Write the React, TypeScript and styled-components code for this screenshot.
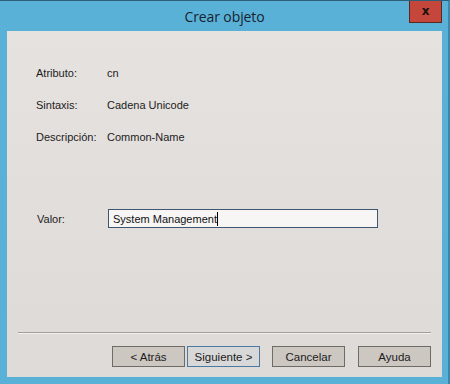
import styled, { createGlobalStyle } from "styled-components";

const GlobalStyle = createGlobalStyle`
  html, body {
    margin: 0;
    padding: 0;
    background: #5ab1d8;
  }
  * {
    box-sizing: border-box;
  }
`;

const Window = styled.div`
  width: 450px;
  height: 384px;
  display: flex;
  flex-direction: column;
  background: #5ab1d8;
  border-top: 1px solid #2f5f78;
  border-right: 2px solid #3f86a8;
  padding: 0 6px 7px 7px;
  font-family: "Liberation Sans", Arial, sans-serif;
`;

const TitleBar = styled.div`
  height: 30px;
  display: grid;
  grid-template-columns: 1fr auto 1fr;
  align-items: start;
`;

const Title = styled.div`
  grid-column: 2;
  padding-top: 6px;
  font-family: "Open Sans", "Liberation Sans", sans-serif;
  font-size: 14px;
  color: #17232e;
  letter-spacing: -0.1px;
`;

const CloseButton = styled.div`
  grid-column: 3;
  justify-self: end;
  margin-right: 0px;
  width: 33px;
  height: 22px;
  background: #c5463a;
  border: 1px solid #5a2a22;
  border-top: none;
  display: flex;
  align-items: center;
  justify-content: center;
  font-family: "DejaVu Sans", sans-serif;
  font-weight: bold;
  font-size: 12px;
  color: #1a1010;
  padding-bottom: 2px;
`;

const Content = styled.div`
  flex: 1;
  display: flex;
  flex-direction: column;
  background: linear-gradient(180deg, #e6e2df 0%, #dedad7 100%);
  padding: 35px 0 10px 0;
`;

const InfoList = styled.div`
  display: flex;
  flex-direction: column;
  gap: 18px;
  padding-left: 29px;
`;

const Row = styled.div`
  display: flex;
  align-items: center;
  font-size: 11px;
  line-height: 14px;
  color: #1c1c1c;
`;

const Label = styled.span`
  width: 71px;
`;

const ValueRow = styled(Row)`
  margin-top: 65px;
  padding-left: 30px;
`;

const Input = styled.div`
  width: 270px;
  height: 19px;
  border: 1px solid #3e5670;
  background: #f7f6f5;
  padding-left: 4px;
  display: flex;
  align-items: center;
  font-size: 11px;
  color: #101010;
`;

const Caret = styled.span`
  display: inline-block;
  width: 1px;
  height: 14px;
  background: #000;
  margin-left: 0px;
`;

const Spacer = styled.div`
  flex: 1;
`;

const Separator = styled.div`
  margin: 0 11px;
  height: 2px;
  border-top: 1px solid #a09d9a;
  border-bottom: 1px solid #f4f2f0;
`;

const ButtonRow = styled.div`
  display: flex;
  justify-content: flex-end;
  padding-right: 11px;
  margin-top: 12px;
`;

const Button = styled.div<{ $primary?: boolean; $gap?: number }>`
  width: 73px;
  height: 21px;
  margin-left: ${(p) => p.$gap ?? 0}px;
  display: flex;
  align-items: center;
  justify-content: center;
  font-size: 11.5px;
  color: #1c1c1c;
  background: ${(p) => (p.$primary ? "#d9d8d8" : "#cdc7c2")};
  border: 1px solid ${(p) => (p.$primary ? "#4a7aa2" : "#6e6a66")};
`;

export default function App() {
  return (
    <>
      <GlobalStyle />
      <Window>
        <TitleBar>
          <Title>Crear objeto</Title>
          <CloseButton>x</CloseButton>
        </TitleBar>
        <Content>
          <InfoList>
            <Row>
              <Label>Atributo:</Label>
              <span>cn</span>
            </Row>
            <Row>
              <Label>Sintaxis:</Label>
              <span>Cadena Unicode</span>
            </Row>
            <Row>
              <Label>Descripción:</Label>
              <span>Common-Name</span>
            </Row>
          </InfoList>
          <ValueRow>
            <Label>Valor:</Label>
            <Input>
              System Management
              <Caret />
            </Input>
          </ValueRow>
          <Spacer />
          <Separator />
          <ButtonRow>
            <Button>&lt; Atrás</Button>
            <Button $primary $gap={2}>
              Siguiente &gt;
            </Button>
            <Button $gap={12}>Cancelar</Button>
            <Button $gap={13}>Ayuda</Button>
          </ButtonRow>
        </Content>
      </Window>
    </>
  );
}
